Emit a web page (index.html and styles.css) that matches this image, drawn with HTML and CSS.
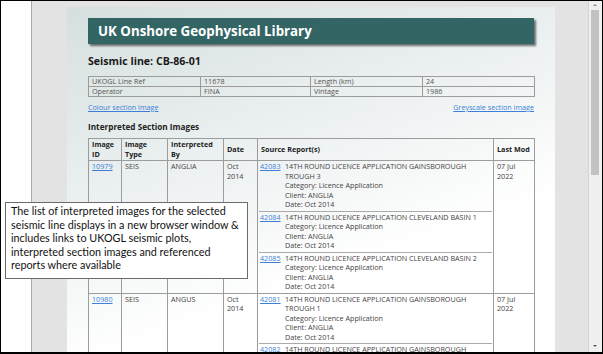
FILE: index.html
```html
<!DOCTYPE html>
<html>
<head>
<meta charset="utf-8">
<title>UK Onshore Geophysical Library</title>
<link rel="stylesheet" href="styles.css">
</head>
<body>
<div class="frame">
  <div class="gutter"></div>
  <div class="viewport">
    <div class="card">
      <div class="banner">UK Onshore Geophysical Library</div>
      <h2 class="line-title">Seismic line: CB-86-01</h2>
      <table class="info">
        <colgroup><col class="c1"><col class="c2"><col class="c3"><col class="c4"></colgroup>
        <tr><td>UKOGL Line Ref</td><td>11678</td><td>Length (km)</td><td>24</td></tr>
        <tr><td>Operator</td><td>FINA</td><td>Vintage</td><td>1986</td></tr>
      </table>
      <div class="links"><a href="#">Colour section image</a><a href="#">Greyscale section image</a></div>
      <h3 class="section">Interpreted Section Images</h3>
      <table class="images">
        <colgroup><col class="k1"><col class="k2"><col class="k3"><col class="k4"><col class="k5"><col class="k6"></colgroup>
        <thead>
          <tr><th>Image<br>ID</th><th>Image<br>Type</th><th>Interpreted<br>By</th><th class="mid">Date</th><th class="mid">Source Report(s)</th><th class="mid">Last Mod</th></tr>
        </thead>
        <tbody>
          <tr>
            <td><a href="#">10979</a></td><td>SEIS</td><td>ANGLIA</td><td>Oct<br>2014</td>
            <td class="src">
              <div class="rep"><a href="#">42083</a><div>14TH ROUND LICENCE APPLICATION GAINSBOROUGH TROUGH 3<br>Category: Licence Application<br>Client: ANGLIA<br>Date: Oct 2014</div></div>
              <div class="rep"><a href="#">42084</a><div>14TH ROUND LICENCE APPLICATION CLEVELAND BASIN 1<br>Category: Licence Application<br>Client: ANGLIA<br>Date: Oct 2014</div></div>
              <div class="rep"><a href="#">42085</a><div>14TH ROUND LICENCE APPLICATION CLEVELAND BASIN 2<br>Category: Licence Application<br>Client: ANGLIA<br>Date: Oct 2014</div></div>
            </td>
            <td>07 Jul<br>2022</td>
          </tr>
          <tr>
            <td><a href="#">10980</a></td><td>SEIS</td><td>ANGUS</td><td>Oct<br>2014</td>
            <td class="src">
              <div class="rep"><a href="#">42081</a><div>14TH ROUND LICENCE APPLICATION GAINSBOROUGH TROUGH 1<br>Category: Licence Application<br>Client: ANGLIA<br>Date: Oct 2014</div></div>
              <div class="rep"><a href="#">42082</a><div>14TH ROUND LICENCE APPLICATION GAINSBOROUGH TROUGH 2<br>Category: Licence Application<br>Client: ANGLIA<br>Date: Oct 2014</div></div>
            </td>
            <td>07 Jul<br>2022</td>
          </tr>
        </tbody>
      </table>
    </div>
  </div>
  <div class="scrollbar">
    <span class="arrow up"></span>
    <div class="thumb"></div>
    <span class="arrow down"></span>
  </div>
  <div class="tooltip">The list of interpreted images for the selected<br>seismic line displays in a new browser window &amp;<br>includes links to UKOGL seismic plots,<br>interpreted section images and referenced<br>reports where available</div>
</div>
</body>
</html>
```

FILE: styles.css
```css
html, body {
  margin: 0;
  padding: 0;
  width: 603px;
  height: 354px;
  overflow: hidden;
  background: #fff;
}

.frame {
  position: relative;
  box-sizing: border-box;
  width: 603px;
  height: 354px;
  border: 1px solid #000;
  border-bottom-width: 2px;
  display: flex;
  overflow: hidden;
  font-family: "Open Sans", "DejaVu Sans", sans-serif;
}

.gutter {
  width: 30px;
  flex: none;
  background: #fff;
  border-right: 1px solid #a9a9a9;
}

.viewport {
  width: 556px;
  flex: none;
  background: #e3e3e3;
  padding-top: 6px;
  overflow: hidden;
}

.card {
  margin-left: 35px;
  width: 446px;
  height: 400px;
  padding: 11px 21px 0;
  background: linear-gradient(160deg, #d6dfdf 0%, #e9eeee 30%, #ffffff 62%);
}

.banner {
  height: 26px;
  background: #346565;
  color: #fff;
  font-weight: 700;
  font-size: 13.3px;
  line-height: 26px;
  padding-left: 10px;
  box-shadow: 2px 2px 2px rgba(0, 0, 0, 0.55);
}

.line-title {
  margin: 10px 0 0;
  font-size: 10.6px;
  line-height: 14px;
  font-weight: 700;
  color: #1a1a1a;
}

.info {
  margin-top: 8px;
  width: 446px;
  table-layout: fixed;
  border-collapse: collapse;
  font-size: 7.2px;
  color: #555;
}
.info .c1 { width: 112px; }
.info .c2 { width: 110px; }
.info .c3 { width: 112px; }
.info .c4 { width: 112px; }
.info td {
  border: 1px solid #9c9c9c;
  padding: 0 3px;
  height: 9px;
  line-height: 9px;
}

.links {
  margin-top: 5px;
  display: flex;
  justify-content: space-between;
  font-size: 7.2px;
  line-height: 10px;
}

a {
  color: #3b7fd8;
  text-decoration: underline;
}

.section {
  margin: 9px 0 0;
  font-size: 8.2px;
  line-height: 11px;
  font-weight: 700;
  color: #222;
}

.images {
  margin-top: 6px;
  width: 446px;
  table-layout: fixed;
  border-collapse: collapse;
  font-size: 7.2px;
  line-height: 9.5px;
  color: #444;
}
.images .k1 { width: 33px; }
.images .k2 { width: 46px; }
.images .k3 { width: 56px; }
.images .k4 { width: 34px; }
.images .k5 { width: 236px; }
.images .k6 { width: 41px; }

.images th {
  border: 1px solid #9c9c9c;
  text-align: left;
  font-weight: 700;
  color: #222;
  padding: 1px 3px;
  vertical-align: top;
  height: 19px;
}
.images th.mid { vertical-align: middle; }

.images td {
  border: 1px solid #9c9c9c;
  vertical-align: top;
  padding: 1px 3px;
}
.images td.src { padding: 0 1px; }

.rep {
  display: grid;
  grid-template-columns: 25px 1fr;
  padding: 1px;
  border-bottom: 1px solid #aaa;
}
.rep:last-child { border-bottom: none; }

.scrollbar {
  position: relative;
  width: 13px;
  flex: none;
  background: #f0f0f0;
  border-left: 1px solid #d4d4d4;
}
.thumb {
  position: absolute;
  left: 2px;
  top: 9px;
  width: 8px;
  height: 165px;
  background: #c2c2c2;
}
.arrow {
  position: absolute;
  left: 4px;
  width: 0;
  height: 0;
  border-left: 2px solid transparent;
  border-right: 2px solid transparent;
}
.arrow.up { top: 3px; border-bottom: 2px solid #8a8a8a; }
.arrow.down { bottom: 5px; border-top: 2px solid #555; }

.tooltip {
  position: absolute;
  left: 4px;
  top: 201px;
  width: 236px;
  height: 74px;
  padding: 1px 0 0 5px;
  background: #fff;
  border: 1px solid #6b6b6b;
  font-family: "Lato", "Open Sans", sans-serif;
  font-size: 10.8px;
  line-height: 13.6px;
  color: #111;
}
```
